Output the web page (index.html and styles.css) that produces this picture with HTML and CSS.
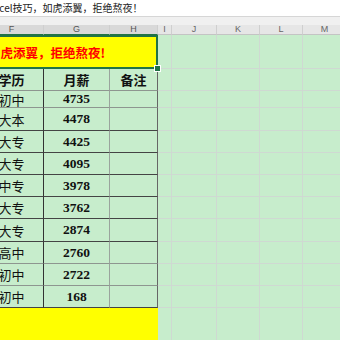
FILE: index.html
```html
<!DOCTYPE html>
<html lang="zh">
<head>
<meta charset="utf-8">
<link rel="stylesheet" href="styles.css">
</head>
<body>
<div class="formula"><span class="formula-text">Excel技巧，如虎添翼，拒绝熬夜！</span></div>
<div class="band"></div>
<div class="sheet">
  <div class="ch sel">F</div><div class="ch sel">G</div><div class="ch sel">H</div><div class="ch">I</div><div class="ch">J</div><div class="ch">K</div><div class="ch">L</div><div class="ch">M</div>

  <div class="title"><span class="title-text">如虎添翼，拒绝熬夜!</span></div><div class="g"></div><div class="g"></div><div class="g"></div><div class="g"></div><div class="g"></div>

  <div class="t cf hd gray">学历</div><div class="t cg hd gray">月薪</div><div class="t ch2 hd gray">备注</div><div class="g"></div><div class="g"></div><div class="g"></div><div class="g"></div><div class="g"></div>

  <div class="t cf gray">初中</div><div class="t cg num gray">4735</div><div class="t ch2 gray"></div><div class="g"></div><div class="g"></div><div class="g"></div><div class="g"></div><div class="g"></div>
  <div class="t cf dark">大本</div><div class="t cg num dark">4478</div><div class="t ch2 dark"></div><div class="g"></div><div class="g"></div><div class="g"></div><div class="g"></div><div class="g"></div>
  <div class="t cf dark">大专</div><div class="t cg num dark">4425</div><div class="t ch2 dark"></div><div class="g"></div><div class="g"></div><div class="g"></div><div class="g"></div><div class="g"></div>
  <div class="t cf dark">大专</div><div class="t cg num dark">4095</div><div class="t ch2 dark"></div><div class="g"></div><div class="g"></div><div class="g"></div><div class="g"></div><div class="g"></div>
  <div class="t cf dark">中专</div><div class="t cg num dark">3978</div><div class="t ch2 dark"></div><div class="g"></div><div class="g"></div><div class="g"></div><div class="g"></div><div class="g"></div>
  <div class="t cf dark">大专</div><div class="t cg num dark">3762</div><div class="t ch2 dark"></div><div class="g"></div><div class="g"></div><div class="g"></div><div class="g"></div><div class="g"></div>
  <div class="t cf dark">大专</div><div class="t cg num dark">2874</div><div class="t ch2 dark"></div><div class="g"></div><div class="g"></div><div class="g"></div><div class="g"></div><div class="g"></div>
  <div class="t cf gray">高中</div><div class="t cg num gray">2760</div><div class="t ch2 gray"></div><div class="g"></div><div class="g"></div><div class="g"></div><div class="g"></div><div class="g"></div>
  <div class="t cf gray">初中</div><div class="t cg num gray">2722</div><div class="t ch2 gray"></div><div class="g"></div><div class="g"></div><div class="g"></div><div class="g"></div><div class="g"></div>
  <div class="t cf dark">初中</div><div class="t cg num dark">168</div><div class="t ch2 dark"></div><div class="g"></div><div class="g"></div><div class="g"></div><div class="g"></div><div class="g"></div>

  <div class="foot"></div><div class="g"></div><div class="g"></div><div class="g"></div><div class="g"></div><div class="g"></div>
</div>
</body>
</html>
```

FILE: styles.css
```css
* { box-sizing: border-box; margin: 0; padding: 0; }
html, body { width: 340px; height: 340px; overflow: hidden; }
body {
  background: #c7edcc;
  font-family: "Liberation Serif", "Noto Sans CJK SC", serif;
  color: #111;
}
.formula {
  height: 17px;
  background: #fff;
  border-bottom: 1px solid #d6d6d6;
  font: 10px/16px "Noto Sans CJK SC", sans-serif;
  color: #222;
  white-space: nowrap;
  overflow: hidden;
}
.formula-text { display: inline-block; margin-left: -11px; }
.band { height: 8px; background: #f0f0f0; }
.sheet {
  display: grid;
  margin-left: -20px;
  grid-template-columns: 64px 66px 48px 14px 45px 43px 43px 44px;
  grid-template-rows: 10px 34px 22px 17px 23px 22px 22px 22px 22px 23px 22px 22px 22px 40px;
}
.ch {
  background: #e6e6e6;
  border-right: 1px solid #cfcfcf;
  border-bottom: 1px solid #c4c4c4;
  font: 9px/9px "Liberation Sans", sans-serif;
  color: #666;
  text-align: center;
}
.ch.sel {
  background: #d9d9d9;
  border-bottom: 1px solid #217346;
  color: #555;
}
.g {
  border-right: 1px solid #cfd9d2;
  border-bottom: 1px solid #cfd9d2;
}
.title {
  grid-column: 1 / 4;
  position: relative;
  background: #ffff00;
  color: #ff0000;
  font: bold 12.5px "Noto Sans CJK SC", sans-serif;
  display: flex;
  align-items: center;
  white-space: nowrap;
  outline: 2px solid #217346;
  outline-offset: -2px;
}
.title-text { margin-left: 8px; }
.title::after {
  content: "";
  position: absolute;
  right: -3px;
  bottom: -3px;
  width: 5px;
  height: 5px;
  background: #217346;
  border: 1px solid #fff;
  z-index: 2;
}
.t {
  display: flex;
  align-items: center;
  justify-content: center;
  border-bottom: 1px solid #444;
  font: 13px "Noto Sans CJK SC", sans-serif;
}
.t.hd { font-weight: bold; }
.t.num { font: bold 13.5px "Liberation Serif", serif; }
.cf { border-right: 1px solid #333; }
.cg { border-right: 1px solid #9aa49d; }
.ch2 { border-right: 1px solid #666; }
.t.dark { border-bottom-color: #444; }
.t.gray { border-bottom-color: #8e9690; }
.foot {
  grid-column: 1 / 4;
  background: #ffff00;
}
```
